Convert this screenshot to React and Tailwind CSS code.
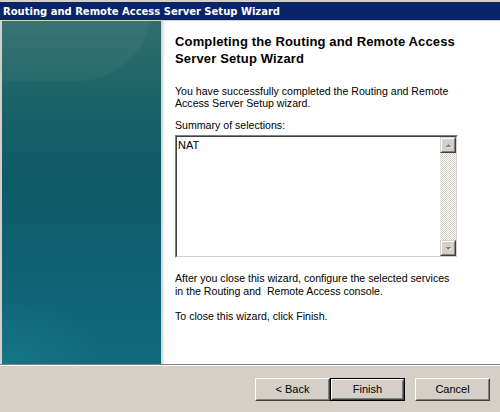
import React from "react";

function Btn({ children, def }) {
  return (
    <div className={def ? "border border-black" : ""}>
      <div className="border border-t-white border-l-white border-r-[#404040] border-b-[#404040]">
        <div className={`${def ? "w-[71px] h-[19px]" : "w-[73px] h-[21px]"} border border-t-[#d4d0c8] border-l-[#d4d0c8] border-r-[#808080] border-b-[#808080] bg-[#d4d0c8] flex items-center justify-center text-[11px] text-black`}>
          {children}
        </div>
      </div>
    </div>
  );
}

function ScrollBtn({ up }) {
  return (
    <div className="w-[16px] h-[16px] bg-[#d4d0c8] border border-t-[#d4d0c8] border-l-[#d4d0c8] border-r-[#404040] border-b-[#404040]">
      <div className="w-full h-full border border-t-white border-l-white border-r-[#808080] border-b-[#808080] flex items-center justify-center">
        <svg width="7" height="5" viewBox="0 0 7 5">
          {up ? (
            <>
              <path d="M1.5 4.5 L4.5 1.5 L7.5 4.5 Z" fill="#ffffff" />
              <path d="M0.5 4 L3.5 1 L6.5 4 Z" fill="#808080" />
            </>
          ) : (
            <>
              <path d="M1.5 1.5 L4.5 4.5 L7.5 1.5 Z" fill="#ffffff" />
              <path d="M0.5 1 L3.5 4 L6.5 1 Z" fill="#808080" />
            </>
          )}
        </svg>
      </div>
    </div>
  );
}

export default function App() {
  return (
    <div className="w-[500px] h-[412px] bg-[#d4d0c8] flex flex-col overflow-hidden" style={{ fontFamily: "'Liberation Sans', Arial, sans-serif" }}>
      <div className="h-[2px] bg-[#d4d0c8]" />
      <div className="h-[18px] bg-[#0a246a] flex items-center pl-[3px] text-white font-bold text-[10px]" style={{ fontFamily: "'DejaVu Sans', Verdana, sans-serif" }}>
        Routing and Remote Access Server Setup Wizard
      </div>
      <div className="h-[1px] bg-[#d4d0c8]" />
      <div className="flex h-[343px] pl-[2px]">
        <div
          className="w-[159px] h-full relative overflow-hidden"
          style={{
            background:
              "radial-gradient(ellipse 90% 30% at 0% 100%, rgba(30,140,150,0.35), transparent 70%), linear-gradient(180deg, #336e6e 0%, #1f6569 18%, #0e5a66 45%, #0f6375 75%, #116a7e 100%)",
          }}
        >
          <div className="absolute -left-[70px] -top-[90px] w-[220px] h-[150px] rounded-full bg-white/[0.04]" />
        </div>
        <div className="w-[4px] h-full bg-gradient-to-r from-[#c8d0d0] to-white" />
        <div className="flex-1 bg-white pl-[10px] pt-[12px]">
          <div className="font-bold text-[13px] leading-[17px] text-black tracking-[0.15px]">
            Completing the Routing and Remote Access
            <br />
            Server Setup Wizard
          </div>
          <div className="mt-[18px] text-[10.6px] leading-[12px] text-black">
            You have successfully completed the Routing and Remote
            <br />
            Access Server Setup wizard.
          </div>
          <div className="mt-[10px] text-[10.6px] leading-[12px] text-black">Summary of selections:</div>
          <div className="mt-[4px] w-[283px] h-[123px] border border-t-[#808080] border-l-[#808080] border-r-white border-b-white">
            <div className="w-full h-full border border-t-[#404040] border-l-[#404040] border-r-[#d4d0c8] border-b-[#d4d0c8] bg-white flex">
              <div className="flex-1 text-[11px] leading-[13px] pl-[1px] pt-[2px] text-black">NAT</div>
              <div
                className="w-[16px] h-full flex flex-col justify-between"
                style={{
                  backgroundColor: "#f4f3f0",
                  backgroundImage:
                    "repeating-conic-gradient(#d4d0c8 0% 25%, #ffffff 0% 50%)",
                  backgroundSize: "2px 2px",
                }}
              >
                <ScrollBtn up />
                <ScrollBtn />
              </div>
            </div>
          </div>
          <div className="mt-[14px] text-[10.6px] leading-[13px] text-black">
            After you close this wizard, configure the selected services
            <br />
            in the Routing and&nbsp; Remote Access console.
          </div>
          <div className="mt-[12px] text-[10.6px] leading-[13px] text-black">To close this wizard, click Finish.</div>
        </div>
      </div>
      <div className="h-[1px] bg-[#808080]" />
      <div className="h-[1px] bg-white" />
      <div className="flex-1 flex items-start pt-[12px] pl-[255px]">
        <Btn>&lt; Back</Btn>
        <Btn def>Finish</Btn>
        <div className="w-[10px]" />
        <Btn>Cancel</Btn>
      </div>
    </div>
  );
}
